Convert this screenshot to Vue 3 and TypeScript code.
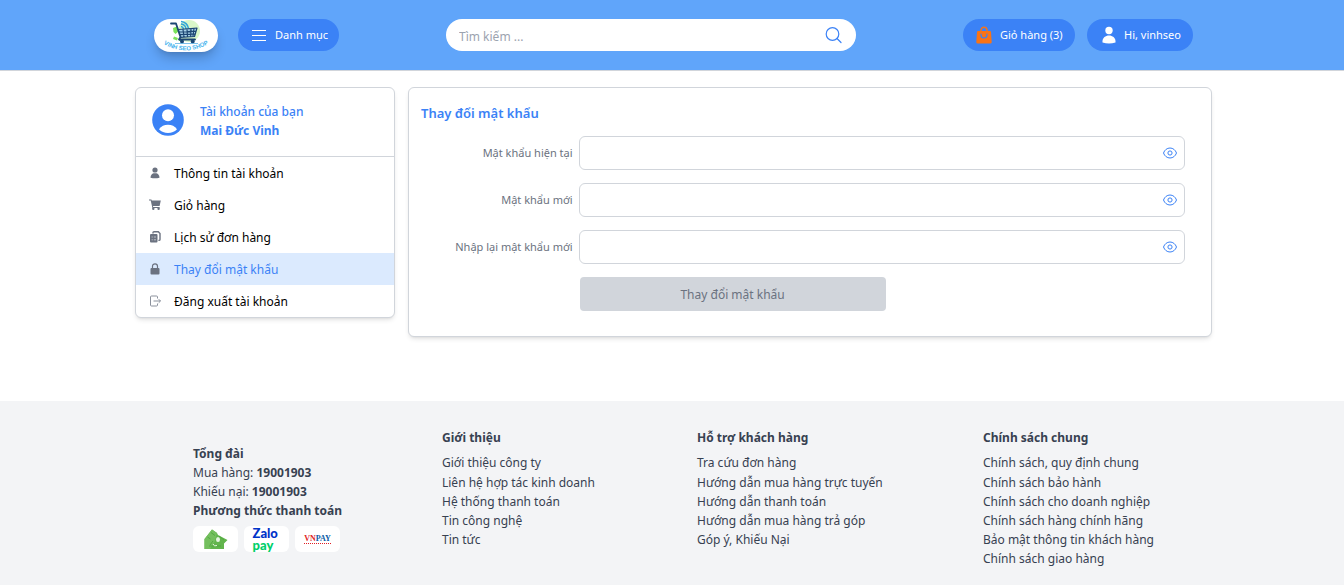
<script setup lang="ts">
import { ref } from 'vue'

interface MenuItem {
  id: string
  label: string
}

interface Field {
  id: string
  label: string
}

interface LinkGroup {
  title: string
  links: string[]
}

const menu: MenuItem[] = [
  { id: 'info', label: 'Thông tin tài khoản' },
  { id: 'cart', label: 'Giỏ hàng' },
  { id: 'orders', label: 'Lịch sử đơn hàng' },
  { id: 'password', label: 'Thay đổi mật khẩu' },
  { id: 'logout', label: 'Đăng xuất tài khoản' },
]

const fields: Field[] = [
  { id: 'current', label: 'Mật khẩu hiện tại' },
  { id: 'next', label: 'Mật khẩu mới' },
  { id: 'repeat', label: 'Nhập lại mật khẩu mới' },
]

const groups: LinkGroup[] = [
  {
    title: 'Giới thiệu',
    links: ['Giới thiệu công ty', 'Liên hệ hợp tác kinh doanh', 'Hệ thống thanh toán', 'Tin công nghệ', 'Tin tức'],
  },
  {
    title: 'Hỗ trợ khách hàng',
    links: [
      'Tra cứu đơn hàng',
      'Hướng dẫn mua hàng trực tuyến',
      'Hướng dẫn thanh toán',
      'Hướng dẫn mua hàng trả góp',
      'Góp ý, Khiếu Nại',
    ],
  },
  {
    title: 'Chính sách chung',
    links: [
      'Chính sách, quy định chung',
      'Chính sách bảo hành',
      'Chính sách cho doanh nghiệp',
      'Chính sách hàng chính hãng',
      'Bảo mật thông tin khách hàng',
      'Chính sách giao hàng',
    ],
  },
]

const active = ref('password')
const search = ref('')
const values = ref<Record<string, string>>({ current: '', next: '', repeat: '' })
const visible = ref<Record<string, boolean>>({ current: false, next: false, repeat: false })
</script>

<template>
  <div class="page">
    <header class="header">
      <div class="container bar">
        <div class="bar-left">
          <a class="logo" href="#" aria-label="Vinh SEO Shop">
            <svg viewBox="0 0 64 33" width="64" height="33">
              <circle cx="35" cy="12" r="11" fill="#d9f7c9" />
              <path d="M19 9l4-1.500 1.500 5-3 2.500-2-2zM20 17.500l4 1.500-1 2.500-4-1.500zM25 20h3v2h-3z" fill="#7be35a" />
              <g fill="none" stroke="#2fa4d8" stroke-width="1.600">
                <path d="M27 7.500a3 3 0 0 1 2.500 2.500M27 5a5.500 5.500 0 0 1 5 5M27 2.500a8 8 0 0 1 7.500 7" />
              </g>
              <path d="M24.500 10.500L43 9l-2.500 8.500-14 .8z" fill="#a9d3ea" />
              <g fill="none" stroke="#1b4572" stroke-linecap="round" stroke-linejoin="round">
                <path d="M17 4.500h5l4.500 13.500-1.500 2.500h16" stroke-width="1.800" />
                <path d="M24.500 10.500L43 9l-2.500 8.500-14 .8M25 13l17-.9M26 15.600l15.500-.8M29 10.500l1 7.500M33 10l.5 7.500M37 9.800l-.3 7.700M40 9.500l-1 7.500" stroke-width="1.200" />
              </g>
              <g fill="#1b4572">
                <circle cx="28" cy="22.500" r="2" />
                <circle cx="38.700" cy="22.500" r="2" />
              </g>
              <path d="M21 24.500h23" stroke="#5bb3e6" stroke-width="0.800" />
              <path id="logo-arc" d="M9.500 25Q32 38 55 24.500" fill="none" />
              <text class="logo-text"><textPath href="#logo-arc">VINH SEO SHOP</textPath></text>
            </svg>
          </a>
          <button class="pill pill-menu" type="button">
            <svg viewBox="0 0 16 12" width="16" height="12" fill="none" stroke="#fff" stroke-width="1">
              <path d="M1 1.500h14M1 6.500h14M1 11.500h14" />
            </svg>
            <span>Danh mục</span>
          </button>
        </div>

        <form class="search" role="search" @submit.prevent>
          <input v-model="search" type="text" placeholder="Tìm kiếm ..." aria-label="Tìm kiếm" />
          <button type="submit" aria-label="Tìm">
            <svg viewBox="0 0 18 18" width="18" height="18" fill="none" stroke="#3b82f6" stroke-width="1.200">
              <circle cx="8.500" cy="8" r="6.300" />
              <path d="M13 12.500l4 4" stroke-linecap="round" />
            </svg>
          </button>
        </form>

        <div class="bar-right">
          <button class="pill pill-cart" type="button">
            <svg viewBox="0 0 16 18" width="16" height="18">
              <path d="M5 6V4.200a3 3 0 0 1 6 0V6" fill="none" stroke="#f97316" stroke-width="1.400" />
              <path d="M2 5h12q.9 0 1 .9L15.700 16a1.200 1.200 0 0 1-1.200 1.400h-13A1.200 1.200 0 0 1 .3 16L1 5.900Q1.100 5 2 5z" fill="#f97316" />
              <path d="M5 8v1a3 3 0 0 0 6 0V8" fill="none" stroke="#3b82f6" stroke-width="1.200" stroke-linecap="round" />
            </svg>
            <span>Giỏ hàng (3)</span>
          </button>
          <button class="pill pill-user" type="button">
            <svg viewBox="0 0 14 18" width="14" height="18" fill="#fff">
              <circle cx="7" cy="4.500" r="3.700" />
              <path d="M.5 16.500v-1.300C.5 12 3.500 9.600 7 9.600s6.500 2.400 6.500 5.600v1.300q-6.500 1.800-13 0z" />
            </svg>
            <span>Hi, vinhseo</span>
          </button>
        </div>
      </div>
    </header>

    <main class="container content">
      <aside class="card sidebar">
        <div class="profile">
          <svg viewBox="0 0 32 32" width="32" height="32">
            <circle cx="16" cy="16" r="15.800" fill="#3b82f6" />
            <circle cx="16" cy="11.200" r="6" fill="#fff" />
            <path d="M7 25.200c2.200-3 5.300-4.400 9-4.400s6.800 1.400 9 4.400c-2.400 2.500-5.500 3.800-9 3.800s-6.600-1.300-9-3.800z" fill="#fff" />
          </svg>
          <div class="profile-text">
            <span>Tài khoản của bạn</span>
            <strong>Mai Đức Vinh</strong>
          </div>
        </div>
        <nav>
          <ul class="menu">
            <li v-for="item in menu" :key="item.id">
              <a href="#" :class="{ active: item.id === active }" @click.prevent="active = item.id">
                <svg v-if="item.id === 'info'" viewBox="0 0 12 12" width="12" height="12" fill="#6b7280">
                  <circle cx="6" cy="3" r="2.600" />
                  <path d="M1.500 10.800c0-2.600 1.500-4.200 3-4.500h3c1.500.3 3 1.900 3 4.500q-4.500 1-9 0z" />
                </svg>
                <svg v-else-if="item.id === 'cart'" viewBox="0 0 12 12" width="12" height="12" fill="#6b7280">
                  <path d="M0 .4h2.400l.4 1.200h9L10.600 7H4l.2.900h6.400v1H3.400L1.700 1.400H0z" />
                  <circle cx="4.300" cy="9.800" r="1.200" />
                  <circle cx="9.600" cy="9.800" r="1.200" />
                </svg>
                <svg v-else-if="item.id === 'orders'" viewBox="0 0 12 12" width="12" height="12">
                  <path d="M4 2.500V1.600Q4 .8 5 .8h4.300L11 2.500v6q0 .9-1 .9h-.6" fill="none" stroke="#6b7280" stroke-width="1.400" />
                  <rect x="1" y="3" width="7.500" height="8.500" rx="1" fill="#6b7280" />
                  <path d="M2.600 6h1.200M4.800 6H7M2.600 8.800h1.200M4.800 8.800H7" stroke="#c5c8ce" stroke-width="0.900" />
                </svg>
                <svg v-else-if="item.id === 'password'" viewBox="0 0 12 12" width="12" height="12">
                  <path d="M3.500 5.500V3.300a2.500 2.500 0 0 1 5 0v2.200" fill="none" stroke="#6b7280" stroke-width="1.200" />
                  <rect x="1.500" y="5" width="9" height="6.500" rx="1" fill="#6b7280" />
                </svg>
                <svg v-else viewBox="0 0 12 12" width="12" height="12" fill="none" stroke="#8b919c" stroke-width="1">
                  <path d="M8.500 3.500v-1.500q0-1-1-1h-5q-1 0-1 1v8q0 1 1 1h5q1 0 1-1V8.500M4.500 6h7M9.700 4.200L11.500 6 9.700 7.800" />
                </svg>
                <span>{{ item.label }}</span>
              </a>
            </li>
          </ul>
        </nav>
      </aside>

      <section class="card panel">
        <h1>Thay đổi mật khẩu</h1>
        <form class="form" @submit.prevent>
          <template v-for="field in fields" :key="field.id">
            <label :for="field.id">{{ field.label }}</label>
            <div class="field">
              <input :id="field.id" v-model="values[field.id]" :type="visible[field.id] ? 'text' : 'password'" />
              <button type="button" aria-label="Hiện mật khẩu" @click="visible[field.id] = !visible[field.id]">
                <svg viewBox="0 0 16 12" width="16" height="12" fill="none" stroke="#3b82f6">
                  <path d="M1.500 6C2.600 3 5 1 8 1s5.400 2 6.500 5c-1.100 3-3.500 5-6.500 5S2.600 9 1.500 6z" stroke-width="1" />
                  <circle cx="8" cy="6" r="2.100" stroke-width="1" />
                </svg>
              </button>
            </div>
          </template>
          <button class="submit" type="submit" disabled>Thay đổi mật khẩu</button>
        </form>
      </section>
    </main>

    <footer class="footer">
      <div class="container footer-grid">
        <div class="contact">
          <strong>Tổng đài</strong>
          <span>Mua hàng: <b>19001903</b></span>
          <span>Khiếu nại: <b>19001903</b></span>
          <strong>Phương thức thanh toán</strong>
          <div class="payments">
            <div class="pay">
              <svg viewBox="0 0 24 22" width="24" height="22">
                <path d="M.5 11L8 1.500l5 3.500 1 2 9.500 5-3.500 3.500V21H.5z" fill="#62b54d" />
                <path d="M.5 11L8 1.500l5 3.500-2 8-5 8H.5z" fill="#74bf5e" />
                <path d="M7 4.500l4 3M3.500 9l3 2M15 8l5 4M5 18h12M9 13l-3 4" stroke="#4ba43b" stroke-width="0.800" fill="none" />
                <ellipse cx="14" cy="11.500" rx="2" ry="2.500" fill="#e6f5e1" />
                <path d="M9 16q1 3 4 1.500" stroke="#e6f5e1" stroke-width="1" fill="none" />
              </svg>
            </div>
            <div class="pay zalo"><span>Zalo</span><span class="green">pay</span></div>
            <div class="pay vnpay">
              <div><span>VN</span><span class="blue">PAY</span></div>
            </div>
          </div>
        </div>
        <nav v-for="group in groups" :key="group.title">
          <h2>{{ group.title }}</h2>
          <ul>
            <li v-for="link in group.links" :key="link"><a href="#">{{ link }}</a></li>
          </ul>
        </nav>
      </div>
    </footer>
  </div>
</template>

<style>
body {
  margin: 0;
  background: #fff;
}
</style>

<style scoped>
.page {
  min-height: 100vh;
  display: flex;
  flex-direction: column;
  font-family: "Noto Sans", "Open Sans", sans-serif;
  font-size: 12px;
  line-height: 19px;
  color: #000;
}

.page *,
.page *::before {
  box-sizing: border-box;
}

button,
input {
  font: inherit;
}

button {
  border: 0;
  padding: 0;
  background: none;
  cursor: pointer;
}

svg {
  display: block;
  flex: none;
}

ul {
  list-style: none;
  margin: 0;
  padding: 0;
}

a {
  color: inherit;
  text-decoration: none;
}

.container {
  width: 100%;
  max-width: 1080px;
  margin: 0 auto;
  padding-left: 3px;
}

/* Header */
.header {
  background: #60a5fa;
  border-bottom: 1px solid #d1d5db;
}

.bar {
  display: flex;
  align-items: flex-start;
  justify-content: space-between;
  height: 70px;
  padding: 19px 19px 0 22px;
}

.bar-left,
.bar-right {
  display: flex;
  gap: 20px;
}

.bar-right {
  gap: 12px;
}

.logo {
  background: #fff;
  border-radius: 17px;
  box-shadow: 0 8px 12px -2px rgba(0, 0, 0, 0.2), 0 3px 5px -3px rgba(0, 0, 0, 0.15);
}

.logo-text {
  font: 700 6px "Liberation Sans", sans-serif;
  fill: #45b4ee;
}

.pill {
  display: flex;
  align-items: center;
  gap: 8px;
  height: 32px;
  padding: 0 13px;
  border-radius: 16px;
  background: #3b82f6;
  color: #fff;
  font-size: 11px;
  white-space: nowrap;
}

.pill span {
  padding-bottom: 2px;
}

.pill-menu {
  width: 101px;
}

.pill-cart {
  width: 112px;
}

.pill-user {
  width: 106px;
  padding: 0 15px;
}

.search {
  display: flex;
  align-items: center;
  width: 410px;
  height: 32px;
  padding: 0 14px 0 13px;
  border-radius: 16px;
  background: #fff;
}

.search input {
  flex: 1;
  min-width: 0;
  border: 0;
  padding: 2px 0 0;
  outline: 0;
  background: none;
}

.search input::placeholder {
  color: #9ca3af;
  opacity: 1;
}

/* Content */
.content {
  display: grid;
  grid-template-columns: 260px 1fr;
  gap: 13px;
  align-items: start;
  padding-top: 16px;
  padding-bottom: 64px;
}

.card {
  border: 1px solid #d1d5db;
  border-radius: 6px;
  background: #fff;
  box-shadow: 0 3px 5px -1px rgba(0, 0, 0, 0.1), 0 2px 3px -2px rgba(0, 0, 0, 0.1);
}

.sidebar {
  overflow: hidden;
}

.profile {
  display: flex;
  gap: 16px;
  height: 69px;
  padding: 16px 16px 0;
  border-bottom: 1px solid #d1d5db;
  color: #3b82f6;
}

.profile-text {
  display: flex;
  flex-direction: column;
  margin-top: -2px;
  font-weight: 500;
}

.menu a {
  display: flex;
  align-items: center;
  gap: 13px;
  height: 32px;
  padding: 0 13px;
}

.menu a.active {
  background: #dbeafe;
  color: #3b82f6;
}

.panel {
  padding: 16px 26px 25px 12px;
}

.panel h1 {
  margin: 0 0 13px;
  font-size: 13px;
  font-weight: 600;
  line-height: 19px;
  color: #3b82f6;
}

.form {
  display: grid;
  grid-template-columns: 1fr 4fr;
  gap: 13px 6px;
  align-items: center;
}

.form label {
  padding-bottom: 2px;
  text-align: right;
  font-size: 11px;
  color: #6b7280;
}

.field {
  display: flex;
  align-items: center;
  height: 34px;
  padding: 0 6px;
  border: 1px solid #d1d5db;
  border-radius: 6px;
}

.field input {
  flex: 1;
  min-width: 0;
  border: 0;
  outline: 0;
  background: none;
}

.submit {
  grid-column: 2;
  width: 306px;
  height: 34px;
  margin-left: 1px;
  border-radius: 4px;
  background: #d1d5db;
  color: #6b7280;
}

/* Footer */
.footer {
  flex: 1;
  padding: 27px 0 17px;
  background: #f3f4f6;
  color: #374151;
}

.footer-grid {
  display: grid;
  grid-template-columns: 249fr 255fr 286fr 171fr;
  align-items: start;
  padding: 0 58px 0 61px;
  white-space: nowrap;
}

.footer h2 {
  margin: 0 0 6px;
  font-size: inherit;
  line-height: 19px;
  font-weight: 700;
}

.footer li:first-child {
  margin-bottom: 1px;
}

.contact {
  display: flex;
  flex-direction: column;
  align-self: center;
}

.payments {
  display: flex;
  gap: 6px;
  margin-top: 6px;
}

.pay {
  display: flex;
  flex-direction: column;
  align-items: center;
  justify-content: center;
  width: 45px;
  height: 26px;
  border-radius: 6px;
  background: #fff;
}

.zalo {
  font-family: Lato, sans-serif;
  font-size: 13px;
  font-weight: 900;
  line-height: 12px;
  color: #0033c9;
}

.zalo span {
  width: 28px;
}

.green {
  color: #00cf6a;
}

.vnpay {
  font-family: "Liberation Serif", serif;
  font-size: 8px;
  font-weight: 700;
  line-height: 8px;
  color: #e11d24;
}

.vnpay div {
  border-bottom: 1px dotted #e11d24;
}

.blue {
  color: #0b5ba6;
}
</style>
